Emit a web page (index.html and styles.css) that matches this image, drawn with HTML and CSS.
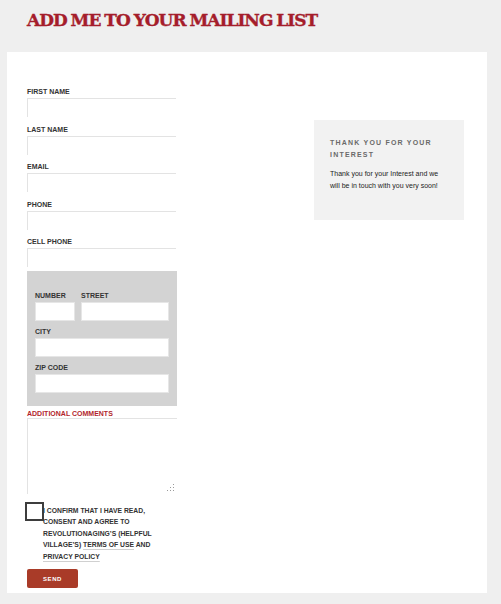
FILE: index.html
```html
<!DOCTYPE html>
<html lang="en">
<head>
<meta charset="utf-8">
<title>Mailing List</title>
<link rel="stylesheet" href="styles.css">
</head>
<body>
<h1 class="page-title">ADD ME TO YOUR MAILING LIST</h1>
<div class="card">
  <form class="signup">
    <div class="field">
      <label class="lbl">FIRST NAME</label>
      <input class="txt" type="text">
    </div>
    <div class="field">
      <label class="lbl">LAST NAME</label>
      <input class="txt" type="text">
    </div>
    <div class="field">
      <label class="lbl">EMAIL</label>
      <input class="txt" type="text">
    </div>
    <div class="field">
      <label class="lbl">PHONE</label>
      <input class="txt" type="text">
    </div>
    <div class="field">
      <label class="lbl">CELL PHONE</label>
      <input class="txt" type="text">
    </div>

    <fieldset class="address">
      <div class="addr-row">
        <div class="addr-num">
          <label class="lbl">NUMBER</label>
          <input class="box" type="text">
        </div>
        <div class="addr-street">
          <label class="lbl">STREET</label>
          <input class="box" type="text">
        </div>
      </div>
      <div class="addr-field">
        <label class="lbl">CITY</label>
        <input class="box" type="text">
      </div>
      <div class="addr-field">
        <label class="lbl">ZIP CODE</label>
        <input class="box" type="text">
      </div>
    </fieldset>

    <label class="lbl lbl-red">ADDITIONAL COMMENTS</label>
    <div class="comments-wrap">
      <textarea class="comments"></textarea>
    </div>

    <div class="consent">
      <span class="check"></span>
      <p class="consent-text">I CONFIRM THAT I HAVE READ, CONSENT AND AGREE TO REVOLUTIONAGING’S (HELPFUL VILLAGE’S) <span class="link">TERMS OF USE</span> AND <span class="link">PRIVACY POLICY</span></p>
    </div>

    <button class="send" type="button">SEND</button>
  </form>

  <aside class="thanks">
    <h2 class="thanks-title">THANK YOU FOR YOUR INTEREST</h2>
    <p class="thanks-text">Thank you for your Interest and we will be in touch with you very soon!</p>
  </aside>
</div>
</body>
</html>
```

FILE: styles.css
```css
html, body {
  margin: 0;
  padding: 0;
}

body {
  background: #efefef;
  font-family: "Liberation Sans", Arial, sans-serif;
  color: #333;
  width: 501px;
  height: 604px;
  overflow: hidden;
}

.page-title {
  margin: 0;
  padding: 8px 0 0 27px;
  height: 52px;
  box-sizing: border-box;
  font-family: "DejaVu Serif", serif;
  font-weight: 900;
  font-size: 17px;
  line-height: 24px;
  color: #a51d2b;
  letter-spacing: -1px;
  word-spacing: -1px;
  -webkit-text-stroke: 0.35px #a51d2b;
}

.card {
  margin-left: 7px;
  width: 480px;
  height: 541px;
  background: #fff;
  box-sizing: border-box;
  padding: 35px 0 0 20px;
  display: grid;
  grid-template-columns: 150px 150px;
  column-gap: 137px;
  align-items: start;
}

.signup {
  display: flex;
  flex-direction: column;
}

.lbl {
  display: block;
  font-size: 7px;
  font-weight: bold;
  line-height: 10px;
  height: 10px;
  color: #333;
  white-space: nowrap;
}

.field {
  display: flex;
  flex-direction: column;
  margin-bottom: 7.5px;
}

.field .lbl {
  margin-bottom: 1px;
}

.txt {
  display: block;
  margin: 0;
  padding: 0;
  width: 149px;
  height: 19px;
  box-sizing: border-box;
  border: none;
  border-top: 1px solid #e3e3e3;
  border-left: 1px solid #e3e3e3;
  background: #fff;
  outline: none;
}

.address {
  margin: -3.5px 0 0;
  padding: 20px 8px 13px;
  border: none;
  background: #d3d3d3;
  width: 150px;
  box-sizing: border-box;
  display: flex;
  flex-direction: column;
  gap: 6px;
}

.addr-row {
  display: grid;
  grid-template-columns: 40px 88px;
  column-gap: 6px;
}

.address .lbl {
  margin-bottom: 1px;
}

.box {
  display: block;
  margin: 0;
  padding: 0;
  width: 100%;
  height: 19px;
  box-sizing: border-box;
  border: 1px solid #e6e6e6;
  background: #fff;
  outline: none;
}

.lbl-red {
  color: #b21f2d;
  margin-top: 3px;
}

.comments-wrap {
  position: relative;
  margin-top: -1px;
  width: 150px;
  height: 76px;
}

.comments {
  display: block;
  margin: 0;
  padding: 0;
  width: 150px;
  height: 76px;
  box-sizing: border-box;
  border: none;
  border-top: 1px solid #e3e3e3;
  border-left: 1px solid #e3e3e3;
  background: #fff;
  outline: none;
  resize: none;
}

/* dotted resize grip in the corner of the comment box */
.comments-wrap::after {
  content: "";
  position: absolute;
  right: 3px;
  bottom: 3px;
  width: 7px;
  height: 7px;
  background:
    linear-gradient(#9a9a9a, #9a9a9a) 6px 0 / 1px 1px no-repeat,
    linear-gradient(#9a9a9a, #9a9a9a) 3px 3px / 1px 1px no-repeat,
    linear-gradient(#9a9a9a, #9a9a9a) 6px 3px / 1px 1px no-repeat,
    linear-gradient(#9a9a9a, #9a9a9a) 0 6px / 1px 1px no-repeat,
    linear-gradient(#9a9a9a, #9a9a9a) 3px 6px / 1px 1px no-repeat,
    linear-gradient(#9a9a9a, #9a9a9a) 6px 6px / 1px 1px no-repeat;
}

.consent {
  position: relative;
  margin-top: 11px;
  padding-left: 16px;
}

.check {
  position: absolute;
  left: -2px;
  top: -3px;
  width: 19px;
  height: 19px;
  box-sizing: border-box;
  border: 2px solid #3d3d3d;
  background: #fff;
}

.consent-text {
  margin: 0;
  padding-top: 0;
  font-size: 6.8px;
  font-weight: bold;
  line-height: 11.4px;
  color: #333;
  width: 120px;
}

.link {
  text-decoration: underline;
  text-decoration-color: #d0d0d0;
  text-underline-offset: 2px;
}

.send {
  margin-top: 7px;
  width: 51px;
  height: 19px;
  padding: 0;
  border: none;
  border-radius: 2px;
  background: #a93b28;
  color: #fff;
  font-family: "Liberation Sans", Arial, sans-serif;
  font-weight: bold;
  font-size: 6px;
  letter-spacing: 0.6px;
}

.thanks {
  margin-top: 33px;
  background: #f2f2f2;
  height: 100px;
  box-sizing: border-box;
  padding: 17px 16px 0;
}

.thanks-title {
  margin: 0;
  font-size: 7px;
  font-weight: bold;
  line-height: 11.5px;
  letter-spacing: 1.2px;
  color: #6a6a6a;
}

.thanks-text {
  margin: 8px 0 0;
  font-size: 7px;
  line-height: 11.5px;
  color: #222;
}
```
